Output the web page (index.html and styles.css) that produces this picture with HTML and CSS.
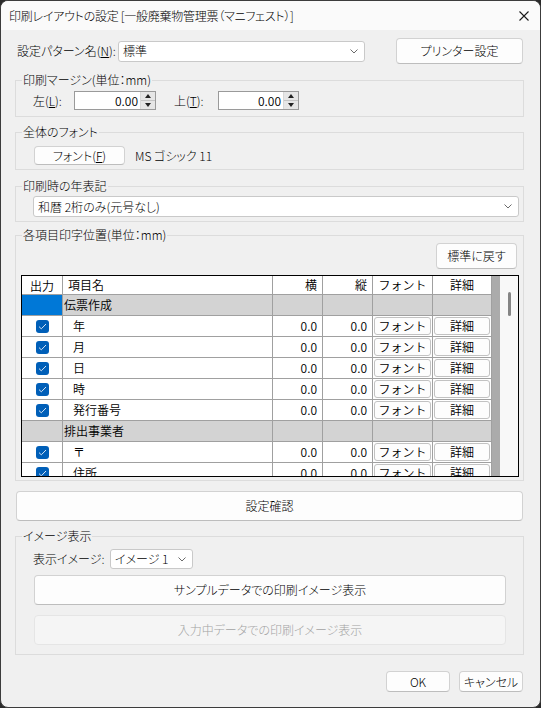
FILE: index.html
```html
<!DOCTYPE html>
<html lang="ja">
<head>
<meta charset="utf-8">
<title>印刷レイアウトの設定</title>
<link rel="stylesheet" href="styles.css">
</head>
<body>
<div class="window">
  <div class="titlebar">
    <span class="title">印刷レイアウトの設定 [一般廃棄物管理票（マニフェスト）]</span>
    <svg class="close" width="10" height="10" viewBox="0 0 10 10"><path d="M0.5 0.5 L9.5 9.5 M9.5 0.5 L0.5 9.5" stroke="#1a1a1a" stroke-width="1.1" fill="none"/></svg>
  </div>
  <div class="content">
    <div class="top-row">
      <div class="field">
        <span class="label lbl-pattern">設定パターン名(<u>N</u>):</span>
        <div class="combo combo-pattern"><span class="combo-text">標準</span><svg class="chev" width="8" height="5" viewBox="0 0 8 5"><polyline points="0.5,0.5 4,4 7.5,0.5" fill="none" stroke="#6b6b6b" stroke-width="1"/></svg></div>
      </div>
      <button class="btn btn-printer">プリンター設定</button>
    </div>

    <fieldset class="group g-margin">
      <legend>印刷マージン(単位：mm)</legend>
      <div class="gbody margin-row">
        <span class="label lbl-left">左(<u>L</u>):</span>
        <div class="spin spin-left"><span class="spin-value">0.00</span><div class="spin-btns"><span class="sb sb-up"><i class="tri-up"></i></span><span class="sb sb-down"><i class="tri-down"></i></span></div></div>
        <span class="label lbl-top">上(<u>T</u>):</span>
        <div class="spin spin-top"><span class="spin-value">0.00</span><div class="spin-btns"><span class="sb sb-up"><i class="tri-up"></i></span><span class="sb sb-down"><i class="tri-down"></i></span></div></div>
      </div>
    </fieldset>

    <fieldset class="group g-font">
      <legend>全体のフォント</legend>
      <div class="gbody font-row">
        <button class="btn btn-font">フォント(<u>F</u>)</button>
        <span class="font-name">MS ゴシック 11</span>
      </div>
    </fieldset>

    <fieldset class="group g-year">
      <legend>印刷時の年表記</legend>
      <div class="gbody year-body">
        <div class="combo combo-year"><span class="combo-text">和暦 2桁のみ(元号なし)</span><svg class="chev" width="8" height="5" viewBox="0 0 8 5"><polyline points="0.5,0.5 4,4 7.5,0.5" fill="none" stroke="#6b6b6b" stroke-width="1"/></svg></div>
      </div>
    </fieldset>

    <fieldset class="group g-pos">
      <legend>各項目印字位置(単位：mm)</legend>
      <div class="gbody pos-body">
        <div class="reset-row"><button class="btn btn-reset">標準に戻す</button></div>
        <div class="grid-box">
          <div class="grid">
            <div class="gr gr-head">
              <div class="c c-out">出力</div>
              <div class="c c-name">項目名</div>
              <div class="c c-num">横</div>
              <div class="c c-num">縦</div>
              <div class="c c-mid">フォント</div>
              <div class="c c-mid">詳細</div>
            </div>
            <div class="gr gr-group">
              <div class="c c-out sel"></div>
              <div class="c c-gname">伝票作成</div>
              <div class="c"></div><div class="c"></div><div class="c"></div><div class="c"></div>
            </div>
            <div class="gr gr-item">
              <div class="c c-out"><span class="chk"><svg width="9" height="7" viewBox="0 0 9 7"><polyline points="1,3.6 3.3,5.8 8,1" fill="none" stroke="#d6e4f5" stroke-width="1"/></svg></span></div>
              <div class="c c-iname">年</div>
              <div class="c c-num">0.0</div><div class="c c-num">0.0</div>
              <div class="c c-btn"><span class="cbtn">フォント</span></div>
              <div class="c c-btn"><span class="cbtn">詳細</span></div>
            </div>
            <div class="gr gr-item">
              <div class="c c-out"><span class="chk"><svg width="9" height="7" viewBox="0 0 9 7"><polyline points="1,3.6 3.3,5.8 8,1" fill="none" stroke="#d6e4f5" stroke-width="1"/></svg></span></div>
              <div class="c c-iname">月</div>
              <div class="c c-num">0.0</div><div class="c c-num">0.0</div>
              <div class="c c-btn"><span class="cbtn">フォント</span></div>
              <div class="c c-btn"><span class="cbtn">詳細</span></div>
            </div>
            <div class="gr gr-item">
              <div class="c c-out"><span class="chk"><svg width="9" height="7" viewBox="0 0 9 7"><polyline points="1,3.6 3.3,5.8 8,1" fill="none" stroke="#d6e4f5" stroke-width="1"/></svg></span></div>
              <div class="c c-iname">日</div>
              <div class="c c-num">0.0</div><div class="c c-num">0.0</div>
              <div class="c c-btn"><span class="cbtn">フォント</span></div>
              <div class="c c-btn"><span class="cbtn">詳細</span></div>
            </div>
            <div class="gr gr-item">
              <div class="c c-out"><span class="chk"><svg width="9" height="7" viewBox="0 0 9 7"><polyline points="1,3.6 3.3,5.8 8,1" fill="none" stroke="#d6e4f5" stroke-width="1"/></svg></span></div>
              <div class="c c-iname">時</div>
              <div class="c c-num">0.0</div><div class="c c-num">0.0</div>
              <div class="c c-btn"><span class="cbtn">フォント</span></div>
              <div class="c c-btn"><span class="cbtn">詳細</span></div>
            </div>
            <div class="gr gr-item">
              <div class="c c-out"><span class="chk"><svg width="9" height="7" viewBox="0 0 9 7"><polyline points="1,3.6 3.3,5.8 8,1" fill="none" stroke="#d6e4f5" stroke-width="1"/></svg></span></div>
              <div class="c c-iname">発行番号</div>
              <div class="c c-num">0.0</div><div class="c c-num">0.0</div>
              <div class="c c-btn"><span class="cbtn">フォント</span></div>
              <div class="c c-btn"><span class="cbtn">詳細</span></div>
            </div>
            <div class="gr gr-group">
              <div class="c c-out"></div>
              <div class="c c-gname">排出事業者</div>
              <div class="c"></div><div class="c"></div><div class="c"></div><div class="c"></div>
            </div>
            <div class="gr gr-item">
              <div class="c c-out"><span class="chk"><svg width="9" height="7" viewBox="0 0 9 7"><polyline points="1,3.6 3.3,5.8 8,1" fill="none" stroke="#d6e4f5" stroke-width="1"/></svg></span></div>
              <div class="c c-iname">〒</div>
              <div class="c c-num">0.0</div><div class="c c-num">0.0</div>
              <div class="c c-btn"><span class="cbtn">フォント</span></div>
              <div class="c c-btn"><span class="cbtn">詳細</span></div>
            </div>
            <div class="gr gr-item">
              <div class="c c-out"><span class="chk"><svg width="9" height="7" viewBox="0 0 9 7"><polyline points="1,3.6 3.3,5.8 8,1" fill="none" stroke="#d6e4f5" stroke-width="1"/></svg></span></div>
              <div class="c c-iname">住所</div>
              <div class="c c-num">0.0</div><div class="c c-num">0.0</div>
              <div class="c c-btn"><span class="cbtn">フォント</span></div>
              <div class="c c-btn"><span class="cbtn">詳細</span></div>
            </div>
          </div>
          <div class="grid-bg"></div>
          <div class="vscroll"><span class="thumb"></span></div>
        </div>
      </div>
    </fieldset>

    <button class="btn btn-check">設定確認</button>

    <fieldset class="group g-image">
      <legend>イメージ表示</legend>
      <div class="gbody image-body">
        <div class="image-row">
          <span class="label lbl-image">表示イメージ:</span>
          <div class="combo combo-image"><span class="combo-text">イメージ 1</span><svg class="chev" width="8" height="5" viewBox="0 0 8 5"><polyline points="0.5,0.5 4,4 7.5,0.5" fill="none" stroke="#6b6b6b" stroke-width="1"/></svg></div>
        </div>
        <button class="btn btn-wide btn-sample">サンプルデータでの印刷イメージ表示</button>
        <button class="btn btn-wide btn-disabled" disabled>入力中データでの印刷イメージ表示</button>
      </div>
    </fieldset>

    <div class="footer">
      <button class="btn btn-ok">OK</button>
      <button class="btn btn-cancel">キャンセル</button>
    </div>
  </div>
</div>
</body>
</html>
```

FILE: styles.css
```css
html, body {
  margin: 0;
  padding: 0;
  background: #2a2a2a;
}

body {
  font-family: "Noto Sans CJK JP", "Noto Sans", sans-serif;
  font-size: 12px;
  font-weight: 300;
  font-feature-settings: "palt";
  color: #000;
}

u {
  text-decoration: underline;
  text-underline-offset: 1px;
}

.window {
  width: 541px;
  height: 708px;
  box-sizing: border-box;
  border: 1px solid #3c3c3c;
  border-radius: 8px;
  background: #f0f0f0;
  overflow: hidden;
  display: flex;
  flex-direction: column;
}

.titlebar {
  height: 29px;
  flex: none;
  background: #fafafa;
  display: flex;
  align-items: center;
  padding-left: 8px;
}

.title {
  font-size: 12px;
  line-height: 16px;
  letter-spacing: -0.25px;
}

.close {
  margin-left: auto;
  margin-right: 11px;
  display: block;
}

.content {
  padding: 0 16px 0 14px;
  display: flex;
  flex-direction: column;
}

.label {
  line-height: 16px;
  white-space: nowrap;
}

/* generic controls */
.btn {
  font: inherit;
  font-size: 12px;
  color: #000;
  background: #fdfdfd;
  border: 1px solid #d2d2d2;
  border-bottom-color: #bdbdbd;
  border-radius: 4px;
  padding: 0;
  margin: 0;
  line-height: 16px;
  box-sizing: border-box;
}

.combo {
  box-sizing: border-box;
  background: #fff;
  border: 1px solid #c9c9c9;
  border-radius: 3px;
  display: flex;
  align-items: center;
  padding: 0 6px 0 4px;
}

.combo-text {
  line-height: 16px;
  white-space: nowrap;
}

.chev {
  margin-left: auto;
  display: block;
}

/* top row */
.top-row {
  margin-top: 8px;
  height: 26px;
  display: flex;
  align-items: center;
  justify-content: space-between;
  padding-left: 2px;
}

.field {
  display: flex;
  align-items: center;
}

.lbl-pattern {
  width: 101px;
}

.combo-pattern {
  width: 247px;
  height: 21px;
}

.btn-printer {
  width: 127px;
  height: 26px;
  margin-right: 1px;
}

/* group boxes */
.group {
  border: 1px solid #dcdcdc;
  margin: 0;
  padding: 0;
  min-width: 0;
}

.group legend {
  font-size: 12px;
  line-height: 16px;
  padding: 0 1px;
  margin-left: 6px;
}

.g-margin {
  margin-top: 8px;
}

.margin-row {
  padding: 3px 0 6px 17px;
  display: flex;
  align-items: center;
}

.lbl-left {
  width: 41px;
}

.lbl-top {
  width: 44px;
  margin-left: 18px;
}

.spin {
  box-sizing: border-box;
  height: 19px;
  background: #fff;
  border: 1px solid #9a9a9a;
  display: flex;
  align-items: stretch;
}

.spin-left { width: 82px; }
.spin-top { width: 81px; }

.spin-value {
  flex: 1;
  text-align: right;
  line-height: 17px;
  padding-right: 2px;
  font-feature-settings: normal;
  font-weight: 350;
}

.spin-btns {
  width: 14px;
  display: flex;
  flex-direction: column;
  border-left: 1px solid #d8d8d8;
  background: #e6e6e6;
}

.sb {
  flex: 1;
  display: flex;
  align-items: center;
  justify-content: center;
}

.sb-up {
  border-bottom: 1px solid #c4c4c4;
}

.tri-up {
  width: 0;
  height: 0;
  border-left: 3.5px solid transparent;
  border-right: 3.5px solid transparent;
  border-bottom: 4px solid #222;
}

.tri-down {
  width: 0;
  height: 0;
  border-left: 3.5px solid transparent;
  border-right: 3.5px solid transparent;
  border-top: 4px solid #222;
}

.g-font {
  margin-top: 7px;
}

.font-row {
  padding: 6px 0 4px 18px;
  display: flex;
  align-items: center;
}

.btn-font {
  width: 91px;
  height: 19px;
}

.font-name {
  margin-left: 10px;
  line-height: 16px;
}

.g-year {
  margin-top: 8px;
}

.year-body {
  padding: 2px 4px 4px 17px;
}

.combo-year {
  height: 21px;
}

.g-pos {
  margin-top: 5px;
}

.pos-body {
  padding: 0 4px 3px 5px;
}

.reset-row {
  display: flex;
  justify-content: flex-end;
  margin-top: 0;
  padding-right: 2px;
}

.btn-reset {
  width: 81px;
  height: 26px;
}

/* data grid */
.grid-box {
  margin-top: 6px;
  height: 202px;
  box-sizing: border-box;
  border: 1px solid #000;
  display: flex;
  overflow: hidden;
  font-feature-settings: normal;
  font-weight: 350;
}

.grid {
  width: 470px;
  flex: none;
  display: flex;
  flex-direction: column;
}

.gr {
  display: grid;
  grid-template-columns: 41px 210px 50px 50px 60px 59px;
  flex: none;
}

.gr-head { height: 19px; }
.gr-group, .gr-item { height: 21px; }

.c {
  box-sizing: border-box;
  border-right: 1px solid #a0a0a0;
  border-bottom: 1px solid #a0a0a0;
  background: #fff;
  line-height: 18px;
  white-space: nowrap;
  overflow: hidden;
}

.gr-head .c {
  line-height: 17px;
}

.gr-group .c {
  background: #d3d3d3;
  line-height: 20px;
}

.gr-group .c.sel {
  background: #0078d7;
}

.gr-item .c {
  line-height: 20px;
}

.c-out {
  text-align: center;
  display: flex;
  align-items: center;
  justify-content: center;
}

.c-name { padding-left: 5px; }
.c-gname { padding-left: 1px; }
.c-iname { padding-left: 10px; }

.c-num {
  text-align: right;
  padding-right: 5px;
}

.c-mid {
  text-align: center;
}

.c-btn {
  padding: 1px;
  display: flex;
}

.cbtn {
  flex: 1;
  box-sizing: border-box;
  border: 1px solid #c2c2c2;
  border-radius: 3px;
  background: #fdfdfd;
  text-align: center;
  line-height: 16px;
}

.chk {
  width: 13px;
  height: 13px;
  border-radius: 3px;
  background: #005fb8;
  display: flex;
  align-items: center;
  justify-content: center;
}

.chk svg {
  display: block;
}

.grid-bg {
  width: 8px;
  flex: none;
  background: #ababab;
}

.vscroll {
  flex: 1;
  background: #f8f8f8;
  position: relative;
}

.thumb {
  position: absolute;
  left: 8px;
  top: 16px;
  width: 3px;
  height: 24px;
  border-radius: 2px;
  background: #858585;
}

/* bottom area */
.btn-check {
  margin-top: 10px;
  margin-left: 1px;
  width: 507px;
  height: 30px;
}

.g-image {
  margin-top: 7px;
}

.image-body {
  padding: 5px 17px 9px 18px;
  display: flex;
  flex-direction: column;
}

.image-row {
  display: flex;
  align-items: center;
}

.lbl-image {
  width: 77px;
  margin-left: -1px;
}

.combo-image {
  width: 83px;
  height: 20px;
}

.btn-wide {
  width: 472px;
  height: 30px;
}

.btn-sample {
  margin-top: 6px;
}

.btn-disabled {
  margin-top: 10px;
  background: #f5f5f5;
  border-color: #e5e5e5;
  color: #a3a3a3;
}

.footer {
  margin-top: 16px;
  display: flex;
  justify-content: flex-end;
  gap: 9px;
  padding-right: 1px;
}

.btn-ok, .btn-cancel {
  width: 64px;
  height: 21px;
}
```
